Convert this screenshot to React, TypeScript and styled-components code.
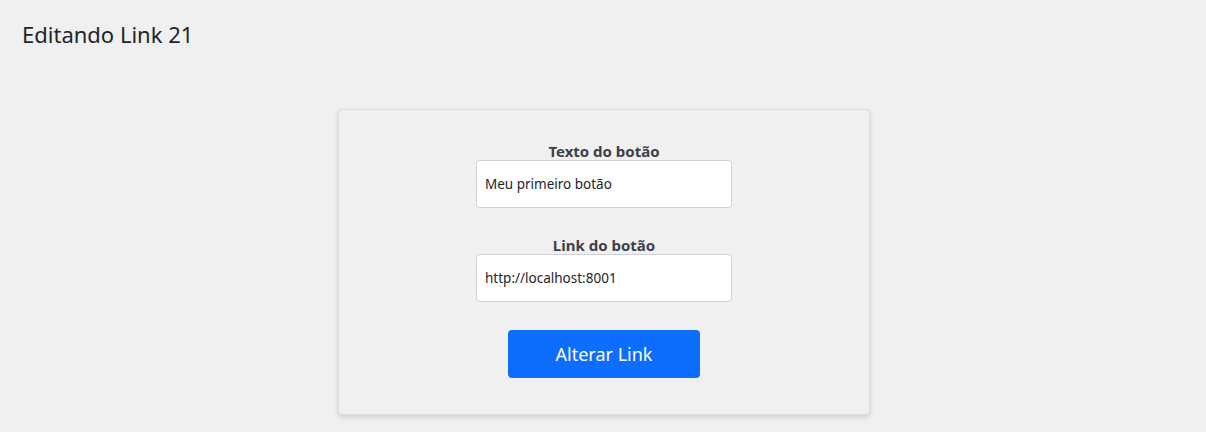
import React from "react";
import styled, { createGlobalStyle } from "styled-components";

const Global = createGlobalStyle`
  html, body { margin: 0; padding: 0; background: #f0f0f0; }
  body { font-family: "Noto Sans", "Open Sans", sans-serif; color: #212529; }
  * { box-sizing: border-box; }
`;

const Page = styled.div`
  display: flex;
  flex-direction: column;
  min-height: 432px;
  padding-left: 2px;
`;

const Title = styled.h1`
  margin: 21px 0 0 20px;
  font-size: 22px;
  line-height: 26px;
  font-weight: 400;
  color: #212529;
`;

const Card = styled.form`
  align-self: center;
  width: 532px;
  margin-top: 62px;
  padding: 32px 0 36px;
  background: #f0f0f0;
  border: 1px solid #dcdcdc;
  border-radius: 4px;
  box-shadow: 0 2px 5px rgba(0, 0, 0, 0.15);
  display: flex;
  flex-direction: column;
  align-items: center;
`;

const Field = styled.label`
  display: flex;
  flex-direction: column;
  align-items: center;
  margin-bottom: 28px;
`;

const LabelText = styled.span`
  font-size: 15px;
  line-height: 18px;
  font-weight: 700;
  color: #3c4049;
`;

const Input = styled.input`
  width: 256px;
  height: 48px;
  padding: 0 8px;
  background: #fff;
  border: 1px solid #cfd2d6;
  border-radius: 4px;
  font-family: inherit;
  font-size: 13.5px;
  color: #212529;
  outline: none;
`;

const Button = styled.button`
  width: 192px;
  height: 48px;
  border: none;
  border-radius: 4px;
  background: #0d6efd;
  color: #fff;
  font-family: inherit;
  font-size: 18px;
  cursor: pointer;
`;

export default function App() {
  return (
    <Page>
      <Global />
      <Title>Editando Link 21</Title>
      <Card onSubmit={(e) => e.preventDefault()}>
        <Field>
          <LabelText>Texto do botão</LabelText>
          <Input defaultValue="Meu primeiro botão" />
        </Field>
        <Field>
          <LabelText>Link do botão</LabelText>
          <Input defaultValue="http://localhost:8001" />
        </Field>
        <Button type="submit">Alterar Link</Button>
      </Card>
    </Page>
  );
}
